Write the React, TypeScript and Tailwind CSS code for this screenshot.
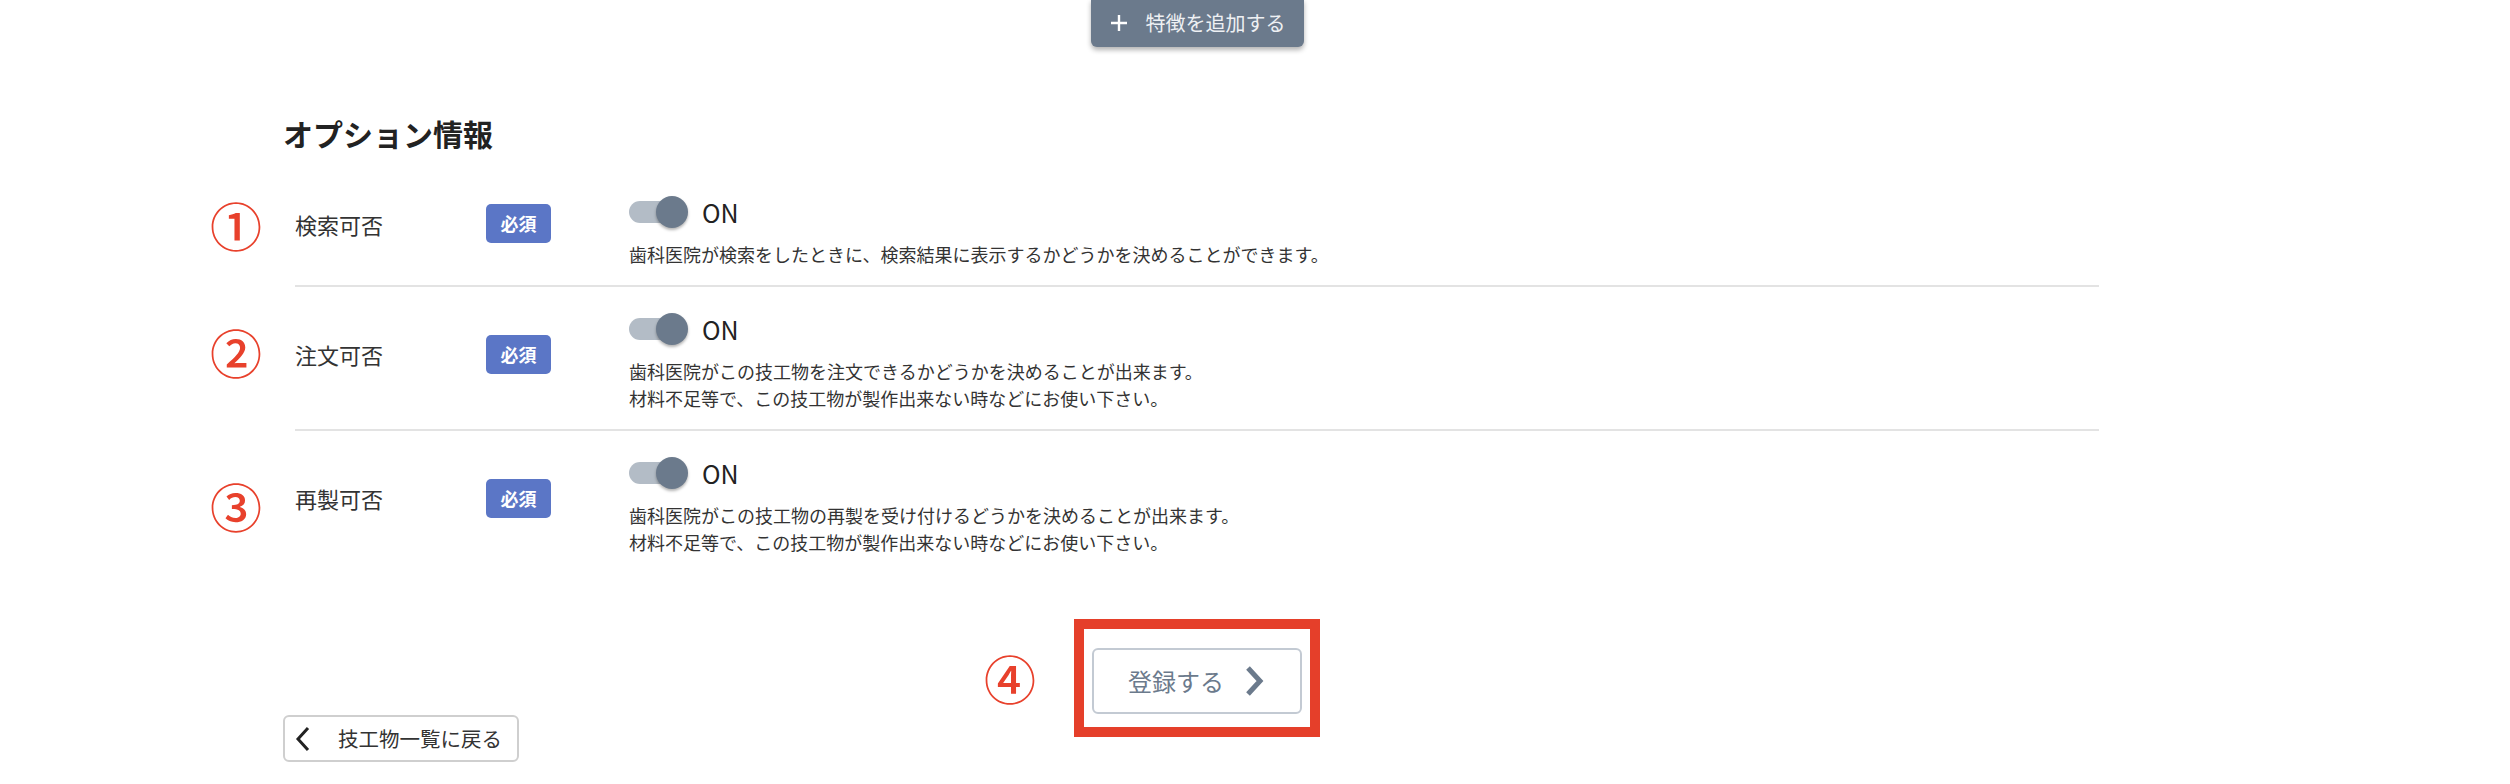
import React from "react";

const FONT = "font-['Noto_Sans_CJK_JP','Noto_Sans',sans-serif]";

function Toggle() {
  return (
    <div className="relative h-[32px] w-[59px] shrink-0">
      <div className="absolute left-0 top-[5px] h-[22px] w-[54px] rounded-full bg-[#b3bcc6]" />
      <div className="absolute right-0 top-0 h-[32px] w-[32px] rounded-full bg-[#6b7a8c] shadow-[0_2px_3px_rgba(0,0,0,0.3)]" />
    </div>
  );
}

type RowProps = { label: string; lines: string[]; last?: boolean };

function Row({ label, lines, last }: RowProps) {
  return (
    <div className={`flex items-center pt-[26px] pb-[17px] ${last ? "" : "border-b-2 border-[#e3e3e3]"}`}>
      <div className="flex items-center pb-[17px]">
        <div className="w-[191px] text-[22px] leading-[30px] text-[#333]">{label}</div>
        <div className="flex h-[39px] w-[65px] items-center justify-center rounded-[5px] bg-[#5b76c6] text-[18px] font-bold text-white">
          必須
        </div>
      </div>
      <div className="ml-[78px] flex flex-col">
        <div className="flex h-[32px] items-center">
          <Toggle />
          <span className="ml-[14px] text-[25px] leading-[32px] text-[#222]">ON</span>
        </div>
        <div className="mt-[13px] text-[18px] leading-[27px] text-[#333]">
          {lines.map((l, i) => (
            <div key={i}>{l}</div>
          ))}
        </div>
      </div>
    </div>
  );
}

function Circled({ ch, x, y }: { ch: string; x: number; y: number }) {
  return (
    <div
      className="absolute flex h-[60px] w-[60px] items-center justify-center text-[52px] font-medium leading-none text-[#e8412c]"
      style={{ left: x - 30, top: y - 30 }}
    >
      {ch}
    </div>
  );
}

export default function App() {
  return (
    <div className={`relative h-[784px] w-[2510px] overflow-hidden bg-white ${FONT}`}>
      <div className="ml-[283px] flex w-[1828px] flex-col">
        <div className="flex justify-center">
          <div className="-mt-[1px] flex h-[48px] w-[213px] items-center rounded-b-[6px] bg-[#6b7a8c] pl-[19px] text-white shadow-[0_3px_5px_rgba(0,0,0,0.3)]">
            <svg width="18" height="18" viewBox="0 0 18 18" className="shrink-0">
              <path d="M9 1v16M1 9h16" stroke="white" strokeWidth="2.4" />
            </svg>
            <span className="ml-[18px] text-[20px] leading-none text-[#eef0f3]">特徴を追加する</span>
          </div>
        </div>

        <h2 className="mt-[66px] text-[30px] font-bold leading-[40px] text-[#222]">オプション情報</h2>

        <div className="mt-[17px] px-[12px]">
          <Row label="検索可否" lines={["歯科医院が検索をしたときに、検索結果に表示するかどうかを決めることができます。"]} />
          <Row
            label="注文可否"
            lines={[
              "歯科医院がこの技工物を注文できるかどうかを決めることが出来ます。",
              "材料不足等で、この技工物が製作出来ない時などにお使い下さい。",
            ]}
          />
          <Row
            label="再製可否"
            last
            lines={[
              "歯科医院がこの技工物の再製を受け付けるどうかを決めることが出来ます。",
              "材料不足等で、この技工物が製作出来ない時などにお使い下さい。",
            ]}
          />
        </div>

        <div className="mt-[75px] flex justify-center">
          <button className="flex h-[66px] w-[210px] items-center justify-center rounded-[6px] border-2 border-[#c3cad3] bg-white text-[#6b7a8c]">
            <span className="text-[24px] leading-none">登録する</span>
            <svg width="22" height="32" viewBox="0 0 22 32" className="ml-[20px]">
              <path d="M4 3l12 13L4 29" fill="none" stroke="#6b7a8c" strokeWidth="5" />
            </svg>
          </button>
        </div>

        <div className="mt-[1px] flex">
          <button className="flex h-[47px] w-[236px] items-center rounded-[6px] border-2 border-[#cfcfcf] bg-white pl-[10px] text-[#333]">
            <svg width="16" height="26" viewBox="0 0 16 26" className="shrink-0">
              <path d="M13 2L3 13l10 11" fill="none" stroke="#222" strokeWidth="3" />
            </svg>
            <span className="ml-[27px] text-[20.5px] leading-none">技工物一覧に戻る</span>
          </button>
        </div>
      </div>

      <Circled ch="①" x={236} y={225} />
      <Circled ch="②" x={236} y={352} />
      <Circled ch="③" x={236} y={506} />
      <Circled ch="④" x={1010} y={678} />

      <div className="pointer-events-none absolute left-[1074px] top-[619px] h-[118px] w-[246px] border-[10px] border-[#e53f2a]" />
    </div>
  );
}
